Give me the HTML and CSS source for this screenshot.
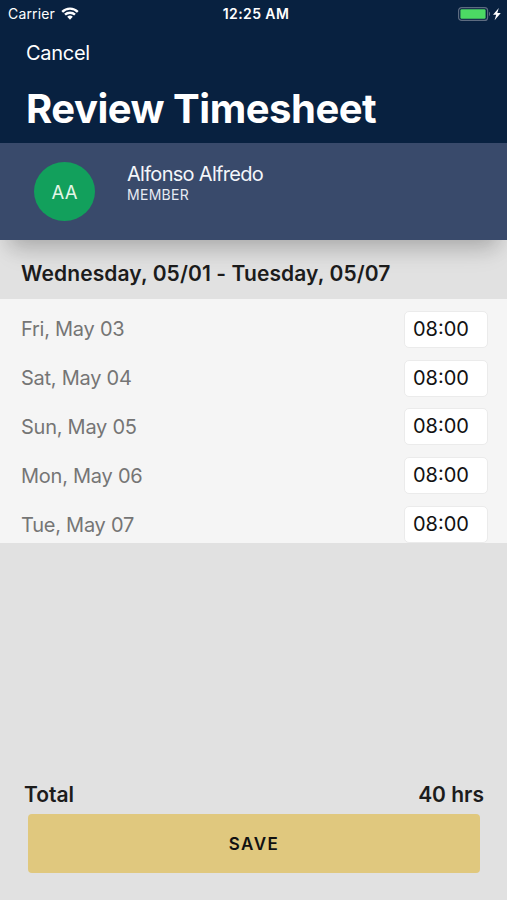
FILE: index.html
```html
<!DOCTYPE html>
<html lang="en">
  <head>
    <meta charset="UTF-8" />
    <meta name="viewport" content="width=device-width, initial-scale=1.0" />
    <title>Review Timesheet</title>
    <link rel="stylesheet" href="styles.css" />
  </head>
  <body>
    <header class="header">
      <div class="status-bar">
        <div class="carrier">
          <span>Carrier</span>
          <svg class="wifi" viewBox="0 0 18 13" width="18" height="13">
            <path d="M1.2 4.8a11.2 11.2 0 0 1 15.6 0" />
            <path d="M4 7.7a7.2 7.2 0 0 1 10 0" />
            <path class="dot" d="M6.2 9.8a4.1 4.1 0 0 1 5.6 0L9 12.7z" />
          </svg>
        </div>
        <span class="time">12:25 AM</span>
        <div class="power">
          <svg viewBox="0 0 44 14" width="44" height="14">
            <rect x="0.6" y="0.6" width="29" height="12.8" rx="3" fill="none" stroke="#5d6b80" stroke-width="1.2" />
            <rect x="2.4" y="2.2" width="25.2" height="9.6" rx="1.2" fill="#4cd964" />
            <path d="M31 4.8v4.4c1.5-.6 1.5-3.8 0-4.4z" fill="#5d6b80" />
            <path d="M40.8 1l-5.8 6.8h3.2l-1.6 5.4 6.2-7.2h-3.5z" fill="#fff" />
          </svg>
        </div>
      </div>
      <a class="cancel">Cancel</a>
      <h1>Review Timesheet</h1>
    </header>

    <section class="member">
      <div class="avatar">AA</div>
      <div>
        <div class="member-name">Alfonso Alfredo</div>
        <div class="member-role">MEMBER</div>
      </div>
    </section>

    <main>
      <h2><span>Wednesday, 05/01 - Tuesday, 05/07</span></h2>
      <ul class="days">
        <li><span class="day">Fri, May 03</span><span class="hours">08:00</span></li>
        <li><span class="day">Sat, May 04</span><span class="hours">08:00</span></li>
        <li><span class="day">Sun, May 05</span><span class="hours">08:00</span></li>
        <li><span class="day">Mon, May 06</span><span class="hours">08:00</span></li>
        <li><span class="day">Tue, May 07</span><span class="hours">08:00</span></li>
      </ul>
    </main>

    <footer>
      <div class="total">
        <span>Total</span>
        <span>40 hrs</span>
      </div>
      <button class="save" type="button">SAVE</button>
    </footer>
  </body>
</html>
```

FILE: styles.css
```css
* {
  box-sizing: border-box;
}
body {
  margin: 0;
  height: 900px;
  display: flex;
  flex-direction: column;
  overflow: hidden;
  background-color: #e1e1e1;
  font-family: Inter, "Liberation Sans", sans-serif;
}
.header {
  height: 143px;
  background-color: #082140;
  color: white;
}
.status-bar {
  height: 27px;
  padding: 0 5px 0 8px;
  display: grid;
  grid-template-columns: 1fr auto 1fr;
  align-items: center;
  font-size: 14px;
}
.carrier {
  display: flex;
  align-items: center;
  gap: 6px;
  letter-spacing: 0.15px;
}
.wifi {
  fill: none;
  stroke: white;
  stroke-width: 2.4;
}
.wifi .dot {
  fill: white;
  stroke: none;
}
.time {
  padding-left: 2px;
  font-weight: 600;
  letter-spacing: 0.4px;
}
.power {
  display: flex;
  justify-content: flex-end;
}
.cancel {
  display: block;
  padding: 14px 26px 0;
  font-size: 20px;
  line-height: 24px;
  letter-spacing: -0.3px;
}
h1 {
  margin: 0;
  padding: 19px 26px 0;
  font-size: 40px;
  line-height: 50px;
  font-weight: 700;
  letter-spacing: -0.48px;
}
.member {
  position: relative;
  height: 97px;
  padding: 19px 34px 0;
  display: flex;
  gap: 32px;
  background-color: #394a6b;
  color: white;
  box-shadow: 0 14px 18px -8px rgba(0, 0, 0, 0.15), 0 22px 26px -12px rgba(0, 0, 0, 0.12);
}
.avatar {
  width: 61px;
  height: 59px;
  border-radius: 50%;
  background-color: #12a05c;
  color: #e3f5e6;
  display: flex;
  align-items: center;
  justify-content: center;
  font-size: 18.5px;
}
.member-name {
  font-size: 20px;
  line-height: 25px;
  letter-spacing: -0.7px;
  color: #f4f6fa;
}
.member-role {
  margin-top: -1px;
  font-size: 14px;
  line-height: 17px;
  letter-spacing: 0.3px;
  color: #e6eaf2;
}
h2 {
  margin: 0;
  height: 59px;
  padding: 8px 21px 0;
  display: flex;
  align-items: center;
  background-color: #e1e1e1;
  color: #1c1c1c;
  font-size: 21px;
  font-weight: 600;
  letter-spacing: 0.1px;
}
.days {
  margin: 0;
  padding: 6px 19px 0 21px;
  height: 244px;
  list-style: none;
  background-color: #f5f5f5;
}
.days li {
  height: 48.8px;
  display: flex;
  align-items: center;
  justify-content: space-between;
}
.day {
  color: #757575;
  font-size: 20px;
  letter-spacing: -0.25px;
}
.hours {
  width: 84px;
  height: 37px;
  padding-left: 8px;
  border: 1px solid #ebebeb;
  border-radius: 5px;
  background-color: white;
  color: #111;
  font-size: 20px;
  line-height: 35px;
}
footer {
  margin-top: auto;
  padding: 0 27px 27px 28px;
}
.total {
  margin: 0 -4px 6px;
  display: flex;
  justify-content: space-between;
  color: #1c1c1c;
  font-size: 21px;
  line-height: 27px;
  font-weight: 600;
}
.save {
  width: 100%;
  height: 59px;
  border: none;
  border-radius: 4px;
  background-color: #e0c87e;
  color: #111;
  font-family: inherit;
  font-size: 17px;
  font-weight: 600;
  letter-spacing: 1.5px;
}
```
